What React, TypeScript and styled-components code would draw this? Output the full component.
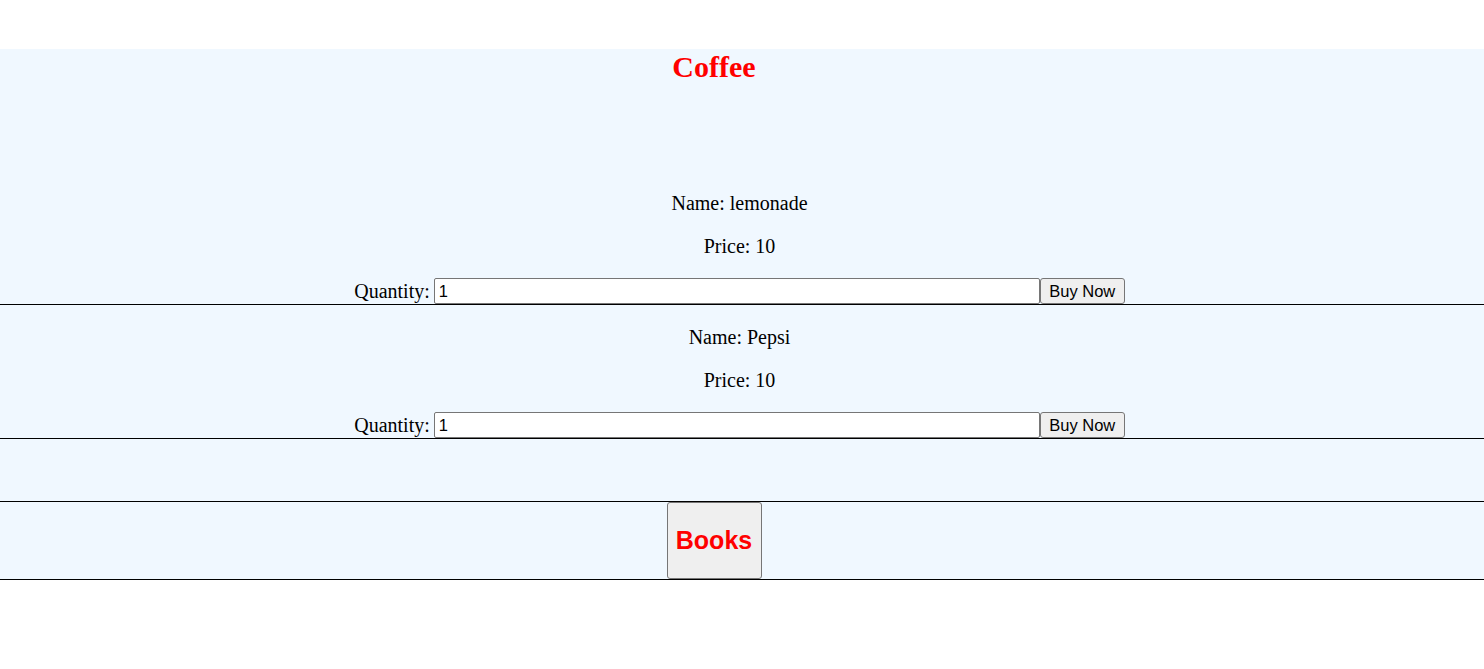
import { useState } from "react";
import styled, { createGlobalStyle } from "styled-components";

const GlobalStyle = createGlobalStyle`
  body {
    margin: 0;
    background: #fff;
    color: #000;
    font-family: "Liberation Serif", "Times New Roman", serif;
  }
`;

const Page = styled.div`
  padding-top: 49px;
`;

const Shop = styled.main`
  background: #f0f8ff;
`;

const Title = styled.h2`
  margin: 0;
  padding: 1px 56px 87px 0;
  text-align: center;
  font-size: 30px;
  line-height: 34px;
  font-weight: bold;
  color: #ff0000;
`;

const Product = styled.section`
  display: flex;
  flex-direction: column;
  align-items: center;
  gap: 20px;
  padding: 21px 5px 0 0;
  border-bottom: 1px solid #000;
`;

const Line = styled.p`
  margin: 0;
  font-size: 20px;
  line-height: 23px;
`;

const QtyRow = styled.div`
  display: flex;
  align-items: flex-start;
  height: 26px;
  font-size: 20px;
  line-height: 26px;
`;

const QtyInput = styled.input`
  box-sizing: border-box;
  width: 606px;
  height: 26px;
  margin: 0 0 0 4px;
  padding: 1px 4px;
  border: 1px solid #767676;
  border-radius: 2px;
  background: #fff;
  color: #000;
  font: 16.5px "Liberation Sans", Arial, sans-serif;
`;

const BuyButton = styled.button`
  box-sizing: border-box;
  width: 85px;
  height: 26px;
  padding: 0;
  border: 1px solid #767676;
  border-radius: 3px;
  background: #efefef;
  color: #000;
  font: 16.5px "Liberation Sans", Arial, sans-serif;
`;

const Spacer = styled.div`
  height: 62px;
  border-bottom: 1px solid #000;
`;

const CategoryBar = styled.nav`
  display: flex;
  justify-content: center;
  padding-right: 56px;
  border-bottom: 1px solid #000;
`;

const CategoryButton = styled.button`
  box-sizing: border-box;
  width: 95px;
  height: 77px;
  padding: 0;
  border: 1px solid #767676;
  border-radius: 3px;
  background: #efefef;
  color: #ff0000;
  font: bold 25px "Liberation Sans", Arial, sans-serif;
`;

const products = [
  { name: "lemonade", price: 10 },
  { name: "Pepsi", price: 10 },
];

const ProductCard = ({ name, price }: { name: string; price: number }) => {
  const [qty, setQty] = useState("1");
  return (
    <Product>
      <Line>Name: {name}</Line>
      <Line>Price: {price}</Line>
      <QtyRow>
        Quantity:
        <QtyInput value={qty} onChange={(e) => setQty(e.target.value)} />
        <BuyButton>Buy Now</BuyButton>
      </QtyRow>
    </Product>
  );
};

export default function App() {
  return (
    <Page>
      <GlobalStyle />
      <Shop>
        <Title>Coffee</Title>
        {products.map((p) => (
          <ProductCard key={p.name} name={p.name} price={p.price} />
        ))}
        <Spacer />
        <CategoryBar>
          <CategoryButton>Books</CategoryButton>
        </CategoryBar>
      </Shop>
    </Page>
  );
}
